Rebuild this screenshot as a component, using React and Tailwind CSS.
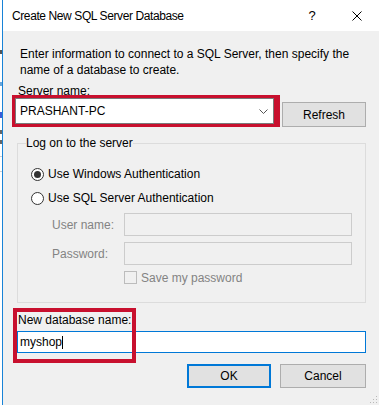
import React from 'react';

// Windows 10 "Create New SQL Server Database" dialog with red annotation boxes
const font = "font-['Segoe_UI','Liberation_Sans',Arial,sans-serif]";

const Radio = ({ checked, label }) => (
  <div className="flex items-center h-[20px]">
    <span className="w-[13px] h-[13px] rounded-full border border-[#333333] bg-white flex items-center justify-center">
      {checked && <span className="w-[7px] h-[7px] rounded-full bg-[#333333]" />}
    </span>
    <span className="ml-[4px] text-[12px] leading-[16px] text-black">{label}</span>
  </div>
);

const DisabledField = ({ label }) => (
  <div className="flex items-center h-[23px]">
    <span className="w-[72px] pl-[34px] box-content text-[12px] leading-[16px] text-[#838383]">{label}</span>
    <div className="w-[228px] h-[23px] border border-[#cccccc] bg-[#f0f0f0]" />
  </div>
);

const Button = ({ children, primary, w }) => (
  <button
    className={
      primary
        ? 'h-[24px] border-2 border-[#0078d7] bg-[#e1e1e1] text-[12px] text-black ' + w
        : 'h-[24px] border border-[#adadad] bg-[#e1e1e1] text-[12px] text-black ' + w
    }
  >
    {children}
  </button>
);

export default function App() {
  return (
    <div className={'w-[379px] h-[405px] flex bg-white overflow-hidden ' + font}>
      {/* bit of the window behind */}
      <div className="w-[2px] flex flex-col bg-white">
        <div className="h-[50px]" />
        <div className="h-[4px] bg-[#555555]" />
        <div className="h-[28px]" />
        <div className="h-[4px] bg-[#6aa5d8]" />
        <div className="h-[26px]" />
        <div className="h-[6px] bg-[#3b5bd6]" />
        <div className="h-[12px]" />
        <div className="h-[4px] bg-[#666666]" />
        <div className="h-[6px]" />
        <div className="h-[4px] bg-[#666666]" />
        <div className="h-[12px]" />
        <div className="h-[1px] bg-[#d0d0d0]" />
        <div className="h-[14px]" />
        <div className="h-[1px] bg-[#d0d0d0]" />
      </div>

      <div className="flex-1 flex flex-col border-l border-[#1883d7] bg-[#f0f0f0] min-w-0">
        {/* title bar */}
        <div className="h-[31px] bg-white flex items-center shrink-0">
          <span className="pl-[9px] text-[12px] tracking-[-0.4px] text-black flex-1">Create New SQL Server Database</span>
          <span className="w-[46px] text-center text-[13px] text-black">?</span>
          <span className="w-[44px] flex justify-center">
            <svg width="10" height="10" viewBox="0 0 10 10">
              <path d="M0.5 0.5L9.5 9.5M9.5 0.5L0.5 9.5" stroke="#000" strokeWidth="1" fill="none" />
            </svg>
          </span>
        </div>

        {/* body */}
        <div className="flex-1 pl-[14px] pr-[13px] flex flex-col text-[12px] text-black">
          <p className="mt-[15px] pl-[3px] leading-[16px]">
            Enter information to connect to a SQL Server, then specify the name of a database to create.
          </p>

          <div className="mt-[6px] pl-[1px] leading-[14px]">Server name:</div>

          <div className="relative flex">
            <div className="ml-[-2px] w-[259px] h-[26px] border border-[#7a7a7a] bg-white flex items-center">
              <span className="pl-[4px] flex-1 leading-[16px]">PRASHANT-PC</span>
              <svg width="9" height="5" viewBox="0 0 9 5" className="mr-[5px]">
                <path d="M0.5 0.5L4.5 4.5L8.5 0.5" stroke="#555" strokeWidth="1" fill="none" />
              </svg>
            </div>
            <button className="ml-[8px] mt-[4px] w-[84px] h-[25px] border border-[#adadad] bg-[#e1e1e1] text-[12px]">
              Refresh
            </button>
            <div className="absolute left-[-5px] top-[-3px] w-[268px] h-[32px] border-[#c8102e] border-t-[3px] border-l-[3px] border-b-[3px] border-r-[6px] pointer-events-none" />
          </div>

          <fieldset className="mt-[8px] border border-[#dcdcdc] pb-[18px]">
            <legend className="ml-[8px] leading-[16px]">Log on to the server</legend>
            <div className="pl-[13px] mt-[13px]">
              <Radio checked label="Use Windows Authentication" />
            </div>
            <div className="pl-[13px] mt-[4px]">
              <Radio label="Use SQL Server Authentication" />
            </div>
            <div className="mt-[5px]">
              <DisabledField label="User name:" />
            </div>
            <div className="mt-[6px]">
              <DisabledField label="Password:" />
            </div>
            <div className="mt-[6px] h-[13px] flex items-center pl-[106px]">
              <span className="w-[13px] h-[13px] border border-[#bcbcbc]" />
              <span className="ml-[4px] leading-[16px] text-[#838383]">Save my password</span>
            </div>
          </fieldset>

          <div className="relative mt-[10px]">
            <div className="pl-[1px] leading-[14px]">New database name:</div>
            <div className="mt-[4px] h-[22px] border border-[#0078d7] bg-white flex items-center">
              <span className="pl-[2px] leading-[16px]">myshop</span>
              <span className="w-[1px] h-[13px] bg-black" />
            </div>
            <div className="absolute left-[-4px] top-[-5px] w-[123px] h-[55px] border-4 border-[#c8102e] pointer-events-none" />
          </div>

          <div className="mt-[11px] flex justify-end gap-[9px]">
            <Button primary w="w-[84px]">OK</Button>
            <Button w="w-[86px]">Cancel</Button>
          </div>

          <div className="flex-1 flex justify-end items-end mr-[-13px]">
            <svg width="10" height="10" viewBox="0 0 10 10" className="mb-[1px] mr-[1px]">
              <rect x="8" y="2" width="1" height="1" fill="#b8b8b8" />
              <rect x="5" y="5" width="1" height="1" fill="#b8b8b8" />
              <rect x="8" y="5" width="1" height="1" fill="#b8b8b8" />
              <rect x="2" y="8" width="1" height="1" fill="#b8b8b8" />
              <rect x="5" y="8" width="1" height="1" fill="#b8b8b8" />
              <rect x="8" y="8" width="1" height="1" fill="#b8b8b8" />
            </svg>
          </div>
        </div>
      </div>
    </div>
  );
}
